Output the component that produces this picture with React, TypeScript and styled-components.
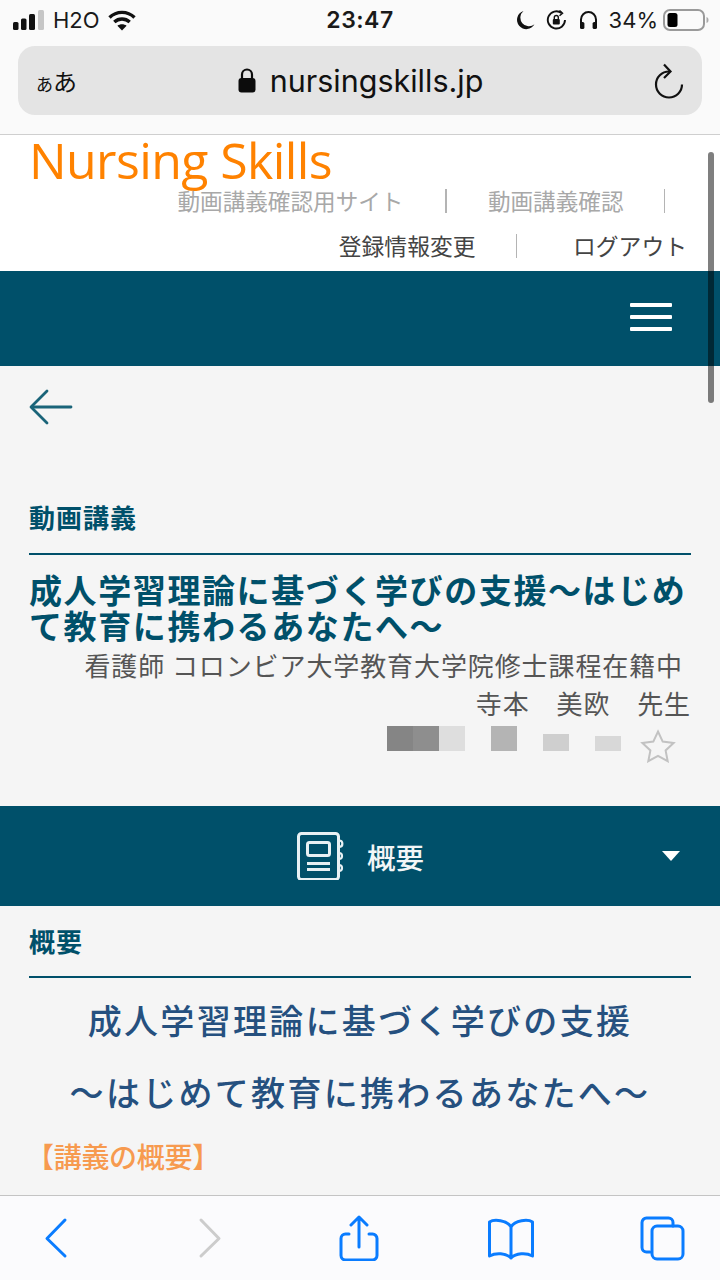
import React from "react";
import styled, { createGlobalStyle } from "styled-components";

const teal = "#00506a";
const blue = "#0a7cff";
const sans = `"Noto Sans CJK JP", "Noto Sans", sans-serif`;
const ui = `Inter, "Noto Sans CJK JP", sans-serif`;

const mosaic = [
  { shade: "#858585", h: 25 },
  { shade: "#8e8e8e", h: 25 },
  { shade: "#dedede", h: 25 },
  { shade: "transparent", h: 25 },
  { shade: "#b4b4b4", h: 25 },
  { shade: "transparent", h: 25 },
  { shade: "#cfcfcf", h: 17 },
  { shade: "transparent", h: 25 },
  { shade: "#d8d8d8", h: 15 },
];

const App = (): JSX.Element => {
  return (
    <Page>
      <GlobalStyle />
      <Chrome>
        <StatusBar>
          <StatusLeft>
            <svg width="32" height="22" viewBox="0 0 32 22">
              <rect x="0" y="13" width="5.5" height="8" rx="1.5" fill="#111" />
              <rect x="8" y="9.5" width="5.5" height="11.5" rx="1.5" fill="#111" />
              <rect x="16" y="5" width="6" height="16" rx="1.5" fill="#111" />
              <rect x="25" y="1" width="6" height="20" rx="1.5" fill="#c6c6c6" />
            </svg>
            <Carrier>H2O</Carrier>
            <svg width="28" height="21" viewBox="0 0 28 21" fill="none" stroke="#111" strokeWidth="3.4">
              <path d="M1.5 7.5C8.5 .7 19.5 .7 26.5 7.5" />
              <path d="M6.3 12C10.8 8 17.2 8 21.7 12" />
              <path d="M14 20.5L9.4 15.8C12 13.8 16 13.8 18.6 15.8Z" fill="#111" stroke="none" />
            </svg>
          </StatusLeft>
          <Clock>23:47</Clock>
          <StatusRight>
            <svg width="19" height="20" viewBox="0 0 19 20">
              <path d="M7.5 1A9.3 9.3 0 1 0 18.5 14.3A8.6 8.6 0 0 1 7.5 1Z" fill="#111" />
            </svg>
            <svg width="22" height="20" viewBox="0 0 22 20" fill="none" stroke="#111" strokeWidth="1.9">
              <path d="M19 10A8.6 8.6 0 1 1 15.5 3" />
              <path d="M13.5 .5L16.5 3.2L13.5 5.8" strokeWidth="1.5" />
              <rect x="6.8" y="9" width="7" height="5.5" rx="1" fill="#111" stroke="none" />
              <path d="M8.3 9V7.5A2 2 0 0 1 12.3 7.5V9" strokeWidth="1.4" />
            </svg>
            <svg width="19" height="20" viewBox="0 0 19 20" fill="none" stroke="#111" strokeWidth="2">
              <path d="M2 14V9.5A7.5 7.5 0 0 1 17 9.5V14" />
              <rect x="1" y="12" width="4.4" height="7" rx="1.6" fill="#111" stroke="none" />
              <rect x="13.6" y="12" width="4.4" height="7" rx="1.6" fill="#111" stroke="none" />
            </svg>
            <Percent>34%</Percent>
            <svg width="46" height="22" viewBox="0 0 46 22">
              <rect x="1" y="1" width="40" height="20" rx="6" fill="none" stroke="#9a9a9a" strokeWidth="2" />
              <rect x="4.5" y="4" width="10" height="14" rx="2.5" fill="#000" />
              <path d="M43.5 8C45 8.5 45.5 9.5 45.5 11C45.5 12.5 45 13.5 43.5 14Z" fill="#aaa" />
            </svg>
          </StatusRight>
        </StatusBar>
        <AddressBar>
          <FontToggle>
            <SmallKana>あ</SmallKana>あ
          </FontToggle>
          <UrlGroup>
            <svg width="18" height="25" viewBox="0 0 18 25">
              <rect x="0.5" y="10" width="17" height="14.5" rx="3" fill="#0c0c0c" />
              <path d="M4 11V6.5A5 5 0 0 1 14 6.5V11" fill="none" stroke="#0c0c0c" strokeWidth="2.2" />
            </svg>
            <Url>nursingskills.jp</Url>
          </UrlGroup>
          <ReloadIcon width="31" height="36" viewBox="0 0 31 36" fill="none" stroke="#111" strokeWidth="2.2">
            <path d="M28 21.5A13 13 0 1 1 15 8.5" />
            <path d="M10 1.5L16.5 8.5L10 15" />
          </ReloadIcon>
        </AddressBar>
      </Chrome>

      <SiteHeader>
        <Logo>Nursing Skills</Logo>
        <NavRow $right={55}>
          <NavLink $muted>動画講義確認用サイト</NavLink>
          <NavSep $before={42} $after={41} />
          <NavLink $muted>動画講義確認</NavLink>
          <NavSep $before={40} $after={0} />
        </NavRow>
        <NavRow $right={33}>
          <NavLink>登録情報変更</NavLink>
          <NavSep $before={40} $after={56} />
          <NavLink>ログアウト</NavLink>
        </NavRow>
      </SiteHeader>

      <MenuBar>
        <Burger>
          <BurgerLine />
          <BurgerLine />
          <BurgerLine />
        </Burger>
      </MenuBar>

      <Main>
        <BackRow>
          <svg width="44" height="36" viewBox="0 0 44 36" fill="none" stroke="#1a6479" strokeWidth="2.8" strokeLinecap="round" strokeLinejoin="round">
            <path d="M42 18H3" />
            <path d="M18 2L2 18L18 34" />
          </svg>
        </BackRow>

        <SectionHead $top={73} $pad={18}>動画講義</SectionHead>
        <LectureTitle>成人学習理論に基づく学びの支援〜はじめて教育に携わるあなたへ〜</LectureTitle>
        <Lecturer $right={37} $top={3}>看護師 コロンビア大学教育大学院修士課程在籍中</Lecturer>
        <Lecturer $right={29} $top={0}>寺本　美欧　先生</Lecturer>
        <RatingRow>
          <Mosaic>
            {mosaic.map((cell, i) => (
              <MosaicCell key={i} $shade={cell.shade} $h={cell.h} />
            ))}
          </Mosaic>
          <StarIcon width="36" height="34" viewBox="0 0 36 34" fill="none" stroke="#c2c2c2" strokeWidth="2">
            <path d="M18 2.5L22.7 12.6L33.6 13.9L25.6 21.4L27.7 32.2L18 26.9L8.3 32.2L10.4 21.4L2.4 13.9L13.3 12.6Z" />
          </StarIcon>
        </RatingRow>

        <AccordionBar>
          <svg width="48" height="48" viewBox="0 0 48 48" fill="none" stroke="#e8f1f4" strokeWidth="3">
            <rect x="1.5" y="1.5" width="40" height="46" rx="3" />
            <rect x="10.5" y="10.5" width="22" height="13" rx="2" />
            <path d="M10 31.5H33M10 37.5H33" />
            <path d="M42 8.5C46.5 8.5 46.5 15 42 15M42 21C46 21 46 27 42 27M42 33C46 33 46 39 42 39" strokeWidth="2.2" />
          </svg>
          <AccordionLabel>概要</AccordionLabel>
          <Caret />
        </AccordionBar>

        <SectionHead $top={17} $pad={17}>概要</SectionHead>
        <Headline>
          成人学習理論に基づく学びの支援
          <br />
          〜はじめて教育に携わるあなたへ〜
        </Headline>
        <Subhead>【講義の概要】</Subhead>
      </Main>

      <Toolbar>
        <ToolIcon viewBox="0 0 46 46" stroke={blue}>
          <path d="M32 5L14 23.5L32 41" />
        </ToolIcon>
        <ToolIcon viewBox="0 0 46 46" stroke="#cccccc">
          <path d="M16 5L34 23.5L16 41" />
        </ToolIcon>
        <ToolIcon viewBox="0 0 46 46" stroke={blue}>
          <path d="M13 19H9.5A4.5 4.5 0 0 0 5 23.5V40.5A4.5 4.5 0 0 0 9.5 45H36.5A4.5 4.5 0 0 0 41 40.5V23.5A4.5 4.5 0 0 0 36.5 19H33" />
          <path d="M23 32V2M15 10L23 2L31 10" />
        </ToolIcon>
        <ToolIcon viewBox="0 0 46 46" stroke={blue}>
          <path d="M23 12C19 5 6 4 1.5 7V41C8 37.5 18 38 23 43C28 38 38 37.5 44.5 41V7C40 4 27 5 23 12V43" />
        </ToolIcon>
        <ToolIcon viewBox="0 0 46 46" stroke={blue}>
          <path d="M11 37H7.5A4.5 4.5 0 0 1 3 32.5V7.5A4.5 4.5 0 0 1 7.5 3H29.5A4.5 4.5 0 0 1 34 7.5V11" />
          <rect x="13" y="11" width="31" height="33" rx="5" />
        </ToolIcon>
      </Toolbar>

      <ScrollThumb />
    </Page>
  );
};

const GlobalStyle = createGlobalStyle`
  html, body {
    margin: 0;
    padding: 0;
    background: #f5f5f5;
  }
  * {
    box-sizing: border-box;
  }
`;

const Page = styled.div`
  position: relative;
  display: flex;
  flex-direction: column;
  width: 720px;
  height: 1280px;
  overflow: hidden;
  font-family: ${sans};
`;

const Chrome = styled.header`
  height: 135px;
  background: #fafafa;
  border-bottom: 1px solid #cfcfcf;
`;

const StatusBar = styled.div`
  display: grid;
  grid-template-columns: 1fr auto 1fr;
  align-items: center;
  height: 38px;
  padding: 2px 13px 0;
  color: #1a1a1a;
`;

const StatusLeft = styled.div`
  display: flex;
  align-items: center;
  gap: 8px;
`;

const StatusRight = styled.div`
  display: flex;
  align-items: center;
  justify-content: flex-end;
  gap: 11px;
  margin-right: -2px;
`;

const Carrier = styled.span`
  font: 400 22px ${ui};
`;

const Clock = styled.span`
  font: 600 23px ${ui};
  letter-spacing: 0.5px;
`;

const Percent = styled.span`
  font: 400 22px ${ui};
  margin-right: -6px;
`;

const AddressBar = styled.div`
  display: grid;
  grid-template-columns: 1fr auto 1fr;
  align-items: center;
  height: 69px;
  margin: 8px 18px 0;
  padding: 0 17px 0 18px;
  background: #e4e4e4;
  border-radius: 17px;
`;

const FontToggle = styled.span`
  font: 400 24px ${sans};
  color: #111;
`;

const SmallKana = styled.span`
  font-size: 17px;
`;

const UrlGroup = styled.div`
  display: flex;
  align-items: center;
  gap: 14px;
`;

const Url = styled.span`
  font: 400 30.5px ${ui};
  color: #111;
`;

const ReloadIcon = styled.svg`
  justify-self: end;
`;

const SiteHeader = styled.div`
  display: flex;
  flex-direction: column;
  height: 136px;
  background: #fff;
`;

const Logo = styled.div`
  height: 50px;
  padding-left: 29px;
  font: 400 50px/50px "Open Sans", sans-serif;
  letter-spacing: -0.6px;
  color: #ff8200;
`;

const NavRow = styled.nav<{ $right: number }>`
  display: flex;
  align-items: center;
  justify-content: flex-end;
  height: 32px;
  margin-bottom: 13px;
  padding-right: ${({ $right }) => $right}px;
`;

const NavLink = styled.span<{ $muted?: boolean }>`
  font: 400 ${({ $muted }) => ($muted ? "22.6px" : "22.8px")}/32px ${sans};
  color: ${({ $muted }) => ($muted ? "#a8a8a8" : "#444")};
`;

const NavSep = styled.span<{ $before: number; $after: number }>`
  width: 1.5px;
  height: 24px;
  margin: 0 ${({ $after }) => $after}px 0 ${({ $before }) => $before}px;
  background: #b4b4b4;
`;

const MenuBar = styled.div`
  display: flex;
  align-items: center;
  justify-content: flex-end;
  height: 95px;
  padding: 0 48px 4px 0;
  background: ${teal};
`;

const Burger = styled.div`
  display: flex;
  flex-direction: column;
  gap: 8px;
  width: 42px;
`;

const BurgerLine = styled.span`
  height: 4px;
  border-radius: 1px;
  background: #fff;
`;

const Main = styled.main`
  flex: 1;
  min-height: 0;
  overflow: hidden;
  background: #f5f5f5;
`;

const BackRow = styled.div`
  display: flex;
  height: 60px;
  padding: 23px 0 0 29px;
`;

const SectionHead = styled.h2<{ $top: number; $pad: number }>`
  margin: ${({ $top }) => $top}px 29px 0;
  padding-bottom: ${({ $pad }) => $pad}px;
  border-bottom: 2px solid ${teal};
  font: 700 26px/36px ${sans};
  letter-spacing: 1px;
  color: ${teal};
`;

const LectureTitle = styled.h1`
  margin: 16px 29px 0;
  font: 700 33px/36px ${sans};
  letter-spacing: 1.6px;
  color: ${teal};
`;

const Lecturer = styled.p<{ $right: number; $top: number }>`
  margin: ${({ $top }) => $top}px ${({ $right }) => $right}px 0 0;
  text-align: right;
  font: 400 26px/38px ${sans};
  letter-spacing: 0.9px;
  color: #555;
`;

const RatingRow = styled.div`
  display: flex;
  justify-content: flex-end;
  align-items: flex-start;
  height: 37px;
  margin: 4px 44px 43px 0;
`;

const Mosaic = styled.div`
  display: grid;
  grid-template-columns: repeat(9, 26px);
  align-items: end;
  height: 25px;
  margin-right: 19px;
`;

const MosaicCell = styled.span<{ $shade: string; $h: number }>`
  height: ${({ $h }) => $h}px;
  background: ${({ $shade }) => $shade};
`;

const StarIcon = styled.svg`
  margin-top: 3px;
`;

const AccordionBar = styled.div`
  display: flex;
  align-items: center;
  gap: 22px;
  height: 100px;
  padding: 0 40px 0 297px;
  background: ${teal};
`;

const AccordionLabel = styled.span`
  font: 500 28.5px ${sans};
  color: #f2f6f7;
`;

const Caret = styled.span`
  width: 0;
  height: 0;
  margin-left: auto;
  border-left: 9px solid transparent;
  border-right: 9px solid transparent;
  border-top: 10px solid #fff;
`;

const Headline = styled.h3`
  margin: 9px 0 0;
  text-align: center;
  font: 500 34px/72px "Liberation Serif", "Noto Sans CJK JP", serif;
  letter-spacing: 2.3px;
  color: #25507f;
`;

const Subhead = styled.h4`
  margin: 10px 0 0 26px;
  font: 500 28px/36px "Liberation Serif", "Noto Sans CJK JP", serif;
  letter-spacing: -0.3px;
  color: #f79a4f;
`;

const Toolbar = styled.footer`
  display: flex;
  align-items: center;
  justify-content: space-between;
  height: 85px;
  padding: 0 35px 0 33px;
  background: #fbfbfd;
  border-top: 1px solid #c4c4c4;
`;

const ToolIcon = styled.svg.attrs({ fill: "none", strokeWidth: 3, strokeLinecap: "round", strokeLinejoin: "round" })`
  width: 46px;
  height: 46px;
`;

const ScrollThumb = styled.div`
  position: absolute;
  top: 152px;
  left: 708px;
  width: 6px;
  height: 251px;
  border-radius: 3px;
  background: rgba(0, 0, 0, 0.5);
`;

export default App;
